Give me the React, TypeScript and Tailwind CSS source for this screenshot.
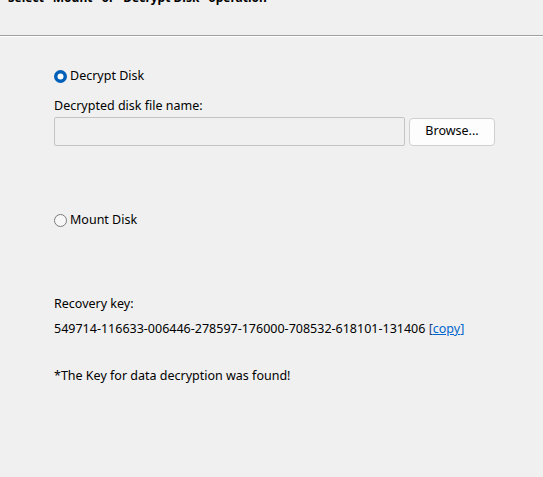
import React from "react";

const font = { fontFamily: '"Noto Sans", "Open Sans", sans-serif' };

const Radio = ({ checked, label }: { checked?: boolean; label: string }) => (
  <label className="flex items-center gap-[3px] text-[12.5px] text-black leading-none">
    {checked ? (
      <svg width="13" height="13" viewBox="0 0 13 13">
        <circle cx="6.5" cy="6.5" r="6.5" fill="#005fb8" />
        <circle cx="6.5" cy="6.5" r="3" fill="#ffffff" />
      </svg>
    ) : (
      <svg width="13" height="13" viewBox="0 0 13 13">
        <circle cx="6.5" cy="6.5" r="6" fill="#f7f7f7" stroke="#7a7a7a" strokeWidth="1" />
      </svg>
    )}
    <span>{label}</span>
  </label>
);

export default function App() {
  return (
    <div className="w-[543px] h-[477px] bg-[#f0f0f0] overflow-hidden text-[12.5px] text-black" style={font}>
      <div className="h-[36px] border-b border-[#a0a0a0] overflow-hidden">
        <div className="pl-[8px] -mt-[10.5px] text-[12px] font-bold leading-[16px] whitespace-nowrap">
          Select "Mount" or "Decrypt Disk" operation
        </div>
      </div>
      <div className="h-px bg-white" />

      <div className="pl-[54px] pr-[48px]">
        <div className="mt-[33px]">
          <Radio checked label="Decrypt Disk" />
        </div>
        <div className="mt-[15px] leading-[16px]">Decrypted disk file name:</div>
        <div className="mt-[3px] flex items-center gap-[4px]">
          <div className="w-[351px] h-[29px] border border-[#c4c4c4] rounded-[2px] bg-[#f0f0f0]" />
          <button className="w-[86px] h-[28px] border border-[#d0d0d0] rounded-[4px] bg-[#fdfdfd] text-[12.5px] text-black">
            Browse...
          </button>
        </div>

        <div className="mt-[68px]">
          <Radio label="Mount Disk" />
        </div>

        <div className="mt-[69px] leading-[16px]">Recovery key:</div>
        <div className="mt-[9px] leading-[16px] whitespace-nowrap">
          549714-116633-006446-278597-176000-708532-618101-131406{" "}
          <span className="text-[#1f3f7f]">[</span>
          <span className="text-[#0066cc] underline">copy</span>
          <span className="text-[#0066cc]">]</span>
        </div>

        <div className="mt-[31px] leading-[16px]">*The Key for data decryption was found!</div>
      </div>
    </div>
  );
}
